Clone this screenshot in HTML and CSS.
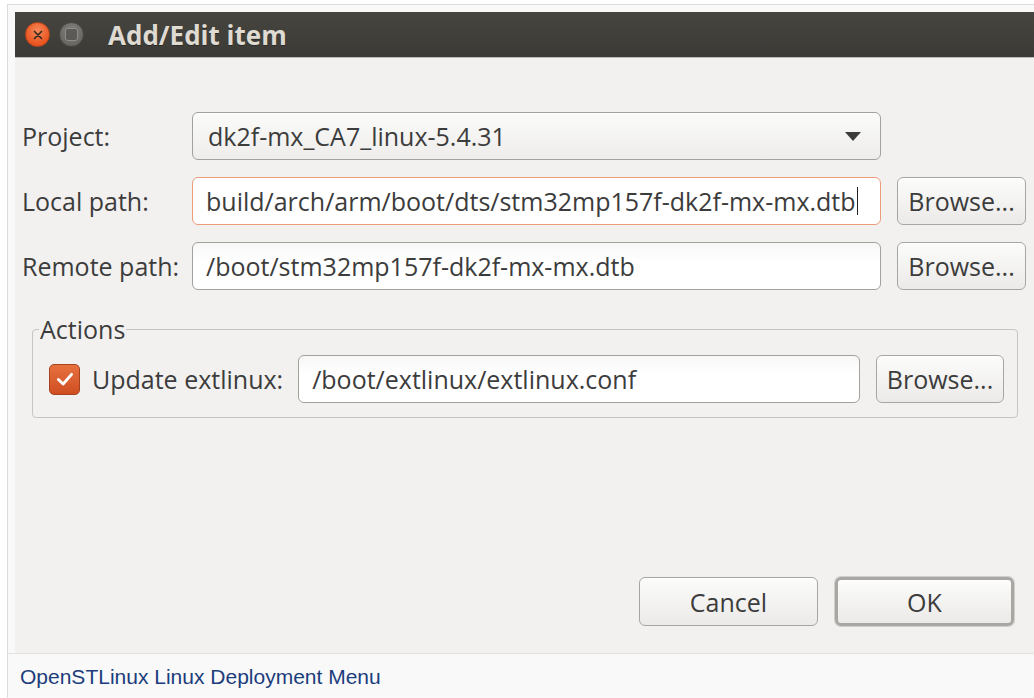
FILE: index.html
```html
<!DOCTYPE html>
<html lang="en">
<head>
<meta charset="utf-8">
<title>Add/Edit item</title>
<link rel="stylesheet" href="styles.css">
</head>
<body>
<div class="figure">
  <div class="dialog">
    <div class="titlebar">
      <span class="wbtn close">
        <svg viewBox="0 0 10 10" width="10" height="10"><path d="M1.5 1.5 L8.5 8.5 M8.5 1.5 L1.5 8.5" stroke="#3a2a22" stroke-width="1.7" stroke-linecap="round"/></svg>
      </span>
      <span class="wbtn minimize"><span class="minimize-inner"></span></span>
      <span class="title">Add/Edit item</span>
    </div>
    <div class="body">
      <div class="form">
        <label class="label">Project:</label>
        <div class="combo">
          <span>dk2f-mx_CA7_linux-5.4.31</span>
          <svg class="arrow" viewBox="0 0 16 9" width="16" height="9"><path d="M0 0 H16 L8 9 Z" fill="#3c3c3c"/></svg>
        </div>
        <span></span>

        <label class="label">Local path:</label>
        <div class="field focused"><span>build/arch/arm/boot/dts/stm32mp157f-dk2f-mx-mx.dtb</span><span class="caret"></span></div>
        <button class="btn">Browse...</button>

        <label class="label">Remote path:</label>
        <div class="field"><span>/boot/stm32mp157f-dk2f-mx-mx.dtb</span></div>
        <button class="btn">Browse...</button>
      </div>

      <fieldset class="group">
        <legend>Actions</legend>
        <div class="group-row">
          <span class="check">
            <svg viewBox="0 0 20 20" width="22" height="22"><path d="M4 10.5 L8.3 14.6 L16 5.8" fill="none" stroke="#fff" stroke-width="2.6" stroke-linecap="round" stroke-linejoin="round"/></svg>
          </span>
          <span class="check-label">Update extlinux:</span>
          <div class="field grow"><span>/boot/extlinux/extlinux.conf</span></div>
          <button class="btn small">Browse...</button>
        </div>
      </fieldset>

      <div class="actions">
        <button class="btn wide">Cancel</button>
        <button class="btn wide default">OK</button>
      </div>
    </div>
  </div>
  <div class="caption">OpenSTLinux Linux Deployment Menu</div>
</div>
</body>
</html>
```

FILE: styles.css
```css
html, body {
  margin: 0;
  background: #ffffff;
  overflow: hidden;
}

.figure {
  margin: 4px 0 0 7px;
  border-left: 1px solid #dcdcdc;
  border-top: 1px solid #dcdcdc;
  background: #f9f9f9;
  padding: 7px 0 0 7px;
  height: 700px;
}

.dialog {
  width: 1019px;
  height: 641px;
  background: #f2f1f0;
  display: flex;
  flex-direction: column;
  font-family: "Open Sans", "DejaVu Sans", sans-serif;
  font-size: 25px;
  color: #3c3c3c;
}

/* window title bar */
.titlebar {
  height: 45px;
  flex: none;
  display: flex;
  align-items: center;
  padding-left: 10px;
  background: linear-gradient(#46453f, #3b3a36);
  border-bottom: 1px solid #bdbbb6;
}

.wbtn {
  width: 25px;
  height: 25px;
  border-radius: 50%;
  display: flex;
  align-items: center;
  justify-content: center;
  box-sizing: border-box;
}

.close {
  background: radial-gradient(circle at 50% 35%, #f58a5a, #e9541f 70%);
  border: 1px solid #b9461c;
}

.minimize {
  margin-left: 9px;
  background: radial-gradient(circle at 50% 35%, #858380, #67655f 75%);
  border: 1px solid #4a4945;
}

.minimize-inner {
  width: 11px;
  height: 11px;
  border-radius: 3px;
  background: #5c5a56;
  border: 1px solid #8f8d89;
}

.title {
  margin-left: 24px;
  font-weight: bold;
  font-size: 26px;
  color: #dfdbd2;
  text-shadow: 0 1px 0 #2a2926;
}

.body {
  flex: 1;
  display: flex;
  flex-direction: column;
  padding-top: 54px;
}

/* label / input / button grid */
.form {
  display: grid;
  grid-template-columns: 154px 1fr 129px;
  grid-auto-rows: 48px;
  column-gap: 16px;
  row-gap: 17px;
  padding: 0 8px 0 7px;
  align-items: center;
}

.label {
  white-space: nowrap;
}

.combo, .field {
  height: 48px;
  box-sizing: border-box;
  border: 1px solid #a3a19d;
  border-radius: 6px;
  display: flex;
  align-items: center;
  padding-left: 13px;
  white-space: nowrap;
  overflow: hidden;
}

.combo {
  background: linear-gradient(#fbfbfa, #eeedeb);
  padding-left: 15px;
  padding-right: 19px;
  justify-content: space-between;
  box-shadow: 0 1px 0 #fff inset;
}

.field {
  background: linear-gradient(#f7f7f7, #ffffff 40%);
}

.field.focused {
  border-color: #ec9a7a;
  background: #ffffff;
}

.caret {
  width: 1px;
  height: 28px;
  background: #222;
  margin-left: 1px;
}

.btn {
  height: 48px;
  box-sizing: border-box;
  border: 1px solid #a8a6a2;
  border-radius: 6px;
  background: linear-gradient(#fcfcfb, #ebeae8);
  font: inherit;
  color: #3c3c3c;
  padding: 0;
  box-shadow: 0 1px 0 #fff inset;
}

/* group box */
.group {
  margin: 28px 16px 0 17px;
  padding: 15px 13px 14px 16px;
  border: 1px solid #c7c5c1;
  border-radius: 4px;
}

.group legend {
  padding: 0 1px;
  margin-left: -10px;
  line-height: 22px;
}

.group-row {
  display: flex;
  align-items: center;
}

.check {
  width: 31px;
  height: 31px;
  box-sizing: border-box;
  border-radius: 5px;
  background: linear-gradient(#e8703f, #cf4f22);
  border: 1px solid #a8421c;
  display: flex;
  align-items: center;
  justify-content: center;
  flex: none;
}

.check-label {
  margin-left: 12px;
  margin-right: 15px;
  white-space: nowrap;
}

.grow {
  flex: 1;
}

.btn.small {
  width: 128px;
  margin-left: 16px;
  flex: none;
}

/* dialog buttons */
.actions {
  margin-top: auto;
  display: flex;
  justify-content: flex-end;
  gap: 17px;
  padding: 0 20px 27px 0;
}

.btn.wide {
  width: 179px;
  height: 49px;
}

.btn.default {
  border: 3px solid #a9a7a3;
  box-shadow: 0 0 0 1px #d0cecb, 0 1px 0 #fff inset;
}

.caption {
  height: 45px;
  margin-left: -7px;
  padding-left: 12px;
  border-top: 1px solid #e2e2e2;
  display: flex;
  align-items: center;
  font-family: "Liberation Sans", Arial, sans-serif;
  font-size: 21px;
  color: #1c3d7c;
}
```
